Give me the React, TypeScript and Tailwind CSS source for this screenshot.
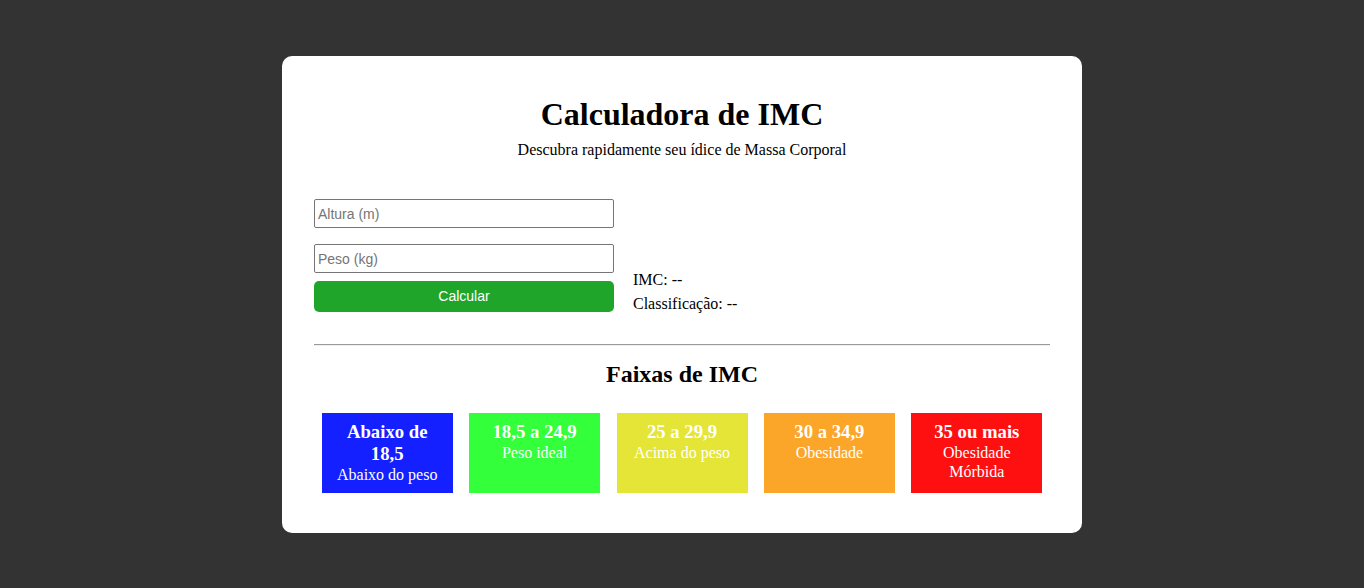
const FAIXAS = [
  { range: 'Abaixo de 18,5', label: 'Abaixo do peso', color: 'bg-[#1420ff]' },
  { range: '18,5 a 24,9', label: 'Peso ideal', color: 'bg-[#33ff3a]' },
  { range: '25 a 29,9', label: 'Acima do peso', color: 'bg-[#e5e538]' },
  { range: '30 a 34,9', label: 'Obesidade', color: 'bg-[#fba629]' },
  { range: '35 ou mais', label: 'Obesidade Mórbida', color: 'bg-[#ff1010]' },
]

const serif = "font-['Liberation_Serif','Times_New_Roman',serif]"
const sans = "font-['Liberation_Sans',Arial,sans-serif]"

export default function App() {
  return (
    <div className={`min-h-[588px] bg-[#333333] flex justify-center pt-[56px] ${serif} text-black`}>
      <div className="w-[800px] h-[477px] bg-white rounded-[10px] px-8 pt-[40px]">

        {/* Header */}
        <h1 className="text-[32px] leading-[37px] font-bold text-center">Calculadora de IMC</h1>
        <p className="text-[16px] leading-[18px] text-center mt-[8px]">
          Descubra rapidamente seu ídice de Massa Corporal
        </p>

        {/* Form */}
        <div className="flex items-end mt-[40px]">
          <div className="w-[300px] flex flex-col">
            <input
              placeholder="Altura (m)"
              className={`h-[29px] border border-[#767676] rounded-[2px] pl-[3px] text-[14px] ${sans} placeholder:text-[#757575] outline-none`}
            />
            <input
              placeholder="Peso (kg)"
              className={`h-[29px] mt-[16px] border border-[#767676] rounded-[2px] pl-[3px] text-[14px] ${sans} placeholder:text-[#757575] outline-none`}
            />
            <button className={`h-[31px] mt-[8px] bg-[#1fa62a] rounded-[5px] text-white text-[14px] ${sans}`}>
              Calcular
            </button>
          </div>
          <div className="ml-[19px] text-[16px] leading-[24px] translate-y-[4px]">
            <div>IMC: --</div>
            <div>Classificação: --</div>
          </div>
        </div>

        <hr className="mt-[32px] border-t border-b border-t-[#9a9a9a] border-b-[#eeeeee]" />

        {/* Faixas */}
        <h2 className="text-[24px] leading-[28px] font-bold text-center mt-[14px]">Faixas de IMC</h2>
        <div className="flex justify-center gap-[16.4px] mt-[25px]">
          {FAIXAS.map(f => (
            <div key={f.range} className={`${f.color} w-[131px] h-[80px] text-white text-center px-[10px] pt-[8px]`}>
              <div className="text-[18.72px] leading-[22px] font-bold">{f.range}</div>
              <div className="text-[16px] leading-[19px]">{f.label}</div>
            </div>
          ))}
        </div>

      </div>
    </div>
  )
}
